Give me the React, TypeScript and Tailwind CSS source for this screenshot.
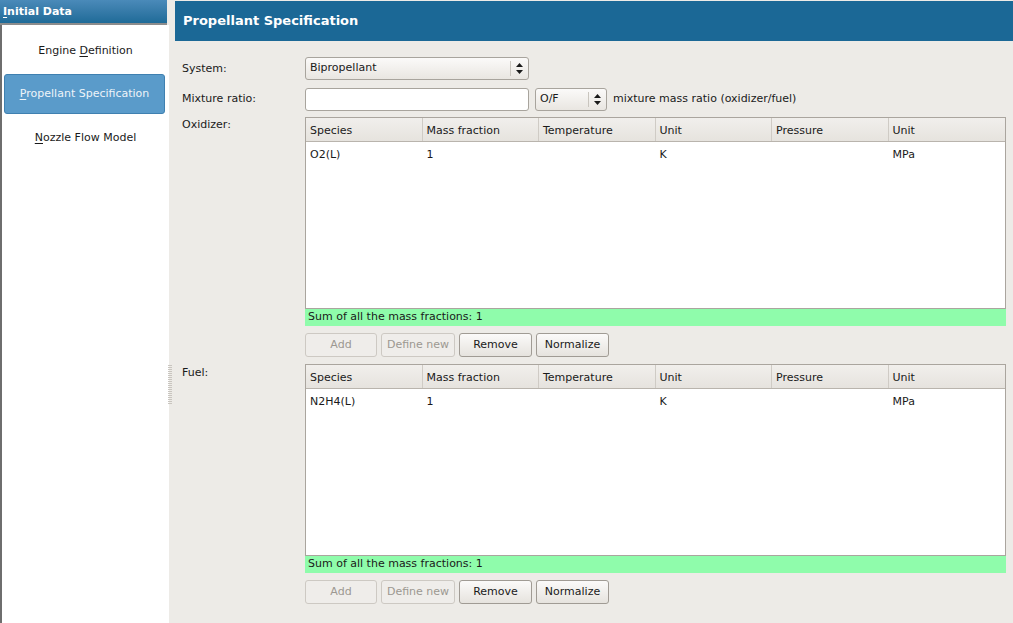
import React from "react";

const font = { fontFamily: '"DejaVu Sans", Verdana, sans-serif' };

const columns = ["Species", "Mass fraction", "Temperature", "Unit", "Pressure", "Unit"];

/** 上下矢印のスピナー */
const Spinner = () => (
  <svg width="7" height="11" viewBox="0 0 7 11" aria-hidden>
    <path d="M3.5 0 L7 4 L0 4 Z" fill="#1a1a1a" />
    <path d="M0 7 L7 7 L3.5 11 Z" fill="#1a1a1a" />
  </svg>
);

const Combo = ({ value, className }: { value: string; className: string }) => (
  <div
    className={`flex h-[23px] items-center rounded-[3px] border border-[#a8a49d] bg-gradient-to-b from-[#fbfaf9] to-[#e9e6e1] text-[11px] text-[#1a1a1a] ${className}`}
  >
    <span className="flex-1 pl-[4px]">{value}</span>
    <span className="h-[15px] w-px bg-[#c9c5be]" />
    <span className="flex w-[17px] justify-center">
      <Spinner />
    </span>
  </div>
);

const Btn = ({ label, disabled, w }: { label: string; disabled?: boolean; w: string }) => (
  <div
    className={`flex h-[24px] items-center justify-center rounded-[3px] border text-[11px] ${w} ${
      disabled
        ? "border-[#cdc9c3] bg-[#efedea] text-[#9c9891]"
        : "border-[#a09b94] bg-gradient-to-b from-[#fbfaf9] to-[#e6e3de] text-[#1a1a1a]"
    }`}
  >
    {label}
  </div>
);

const SpeciesTable = ({ species }: { species: string }) => (
  <div className="flex flex-col">
    <div className="flex h-[192px] flex-col border border-[#aaa59e] bg-white">
      <div className="flex h-[24px] border-b border-[#b9b4ad] bg-gradient-to-b from-[#f1efec] to-[#e6e3de]">
        {columns.map((c, i) => (
          <div
            key={i}
            className="flex w-[116.6px] items-center border-r border-[#cfcbc5] pl-[4px] pt-[3px] text-[11px] text-[#1a1a1a] last:border-r-0"
          >
            {c}
          </div>
        ))}
      </div>
      <div className="flex h-[24px] items-center pt-[2px] text-[11px] text-[#1a1a1a]">
        <div className="w-[116.6px] pl-[4px]">{species}</div>
        <div className="w-[116.6px] pl-[4px]">1</div>
        <div className="w-[116.6px] pl-[4px]"></div>
        <div className="w-[116.6px] pl-[4px]">K</div>
        <div className="w-[116.6px] pl-[4px]"></div>
        <div className="w-[116.6px] pl-[4px]">MPa</div>
      </div>
    </div>
    <div className="flex h-[17px] items-center bg-[#8ffcab] pl-[3px] text-[11px] text-[#1a1a1a]">
      Sum of all the mass fractions: 1
    </div>
    <div className="mt-[7px] flex gap-[4px]">
      <Btn label="Add" disabled w="w-[72px]" />
      <Btn label="Define new" disabled w="w-[74px]" />
      <Btn label="Remove" w="w-[73px]" />
      <Btn label="Normalize" w="w-[73px]" />
    </div>
  </div>
);

export default function App() {
  return (
    <div className="flex h-[623px] w-[1013px] overflow-hidden bg-[#edebe7]" style={font}>
      {/* 左のナビ */}
      <aside className="flex w-[169px] shrink-0 flex-col">
        <div className="flex h-[25px] w-[167px] items-center border-b-2 border-[#8c8c8c] bg-gradient-to-b from-[#4a8ab9] to-[#1e6b98] pl-[3px] pt-[2px] text-[11px] font-bold text-white">
          <span className="underline underline-offset-2">I</span>nitial Data
        </div>
        <div className="flex flex-1 flex-col gap-[4px] border-l-2 border-[#6e6e6e] bg-white pt-[5px]">
          <div className="mx-[4px] flex h-[40px] items-center justify-center pt-[2px] text-[11px] text-[#1a1a1a]">
            Engine&nbsp;<span className="underline underline-offset-2">D</span>efinition
          </div>
          <div className="ml-[2px] mr-[4px] flex h-[40px] items-center justify-center rounded-[3px] border border-[#3f80b0] bg-[#5a9bca] text-[11px] text-[#eef4f9]">
            <span className="underline underline-offset-2">P</span>ropellant Specification
          </div>
          <div className="mx-[4px] flex h-[40px] items-center justify-center text-[11px] text-[#1a1a1a]">
            <span className="underline underline-offset-2">N</span>ozzle Flow Model
          </div>
        </div>
      </aside>

      {/* スプリッタ */}
      <div className="flex w-[6px] shrink-0 flex-col">
        <div className="ml-[-1px] mt-[365px] h-[40px] w-[4px] bg-[repeating-linear-gradient(to_bottom,#c9c5bf_0,#c9c5bf_1px,transparent_1px,transparent_2px)]" />
      </div>

      {/* 右の本体 */}
      <main className="flex flex-1 flex-col pt-[1px]">
        <div className="flex h-[40px] items-center bg-[#1b6896] pl-[8px] text-[13px] font-bold text-white">
          Propellant Specification
        </div>
        <div className="flex flex-col pl-[7px] pt-[16px]">
          <div className="flex items-center">
            <span className="w-[123px] pt-[1px] text-[11px] text-[#1a1a1a]">System:</span>
            <Combo value="Bipropellant" className="w-[224px]" />
          </div>
          <div className="mt-[8px] flex items-center">
            <span className="w-[123px] text-[11px] text-[#1a1a1a]">Mixture ratio:</span>
            <div className="h-[23px] w-[224px] rounded-[3px] border border-[#a8a49d] bg-white" />
            <Combo value="O/F" className="ml-[6px] w-[72px]" />
            <span className="ml-[6px] text-[11px] text-[#1a1a1a]">mixture mass ratio (oxidizer/fuel)</span>
          </div>
          <div className="mt-[6px] flex">
            <span className="w-[123px] text-[11px] text-[#1a1a1a]">Oxidizer:</span>
            <div className="w-[701px]">
              <SpeciesTable species="O2(L)" />
            </div>
          </div>
          <div className="mt-[7px] flex">
            <span className="w-[123px] pt-[1px] text-[11px] text-[#1a1a1a]">Fuel:</span>
            <div className="w-[701px]">
              <SpeciesTable species="N2H4(L)" />
            </div>
          </div>
        </div>
      </main>
    </div>
  );
}
